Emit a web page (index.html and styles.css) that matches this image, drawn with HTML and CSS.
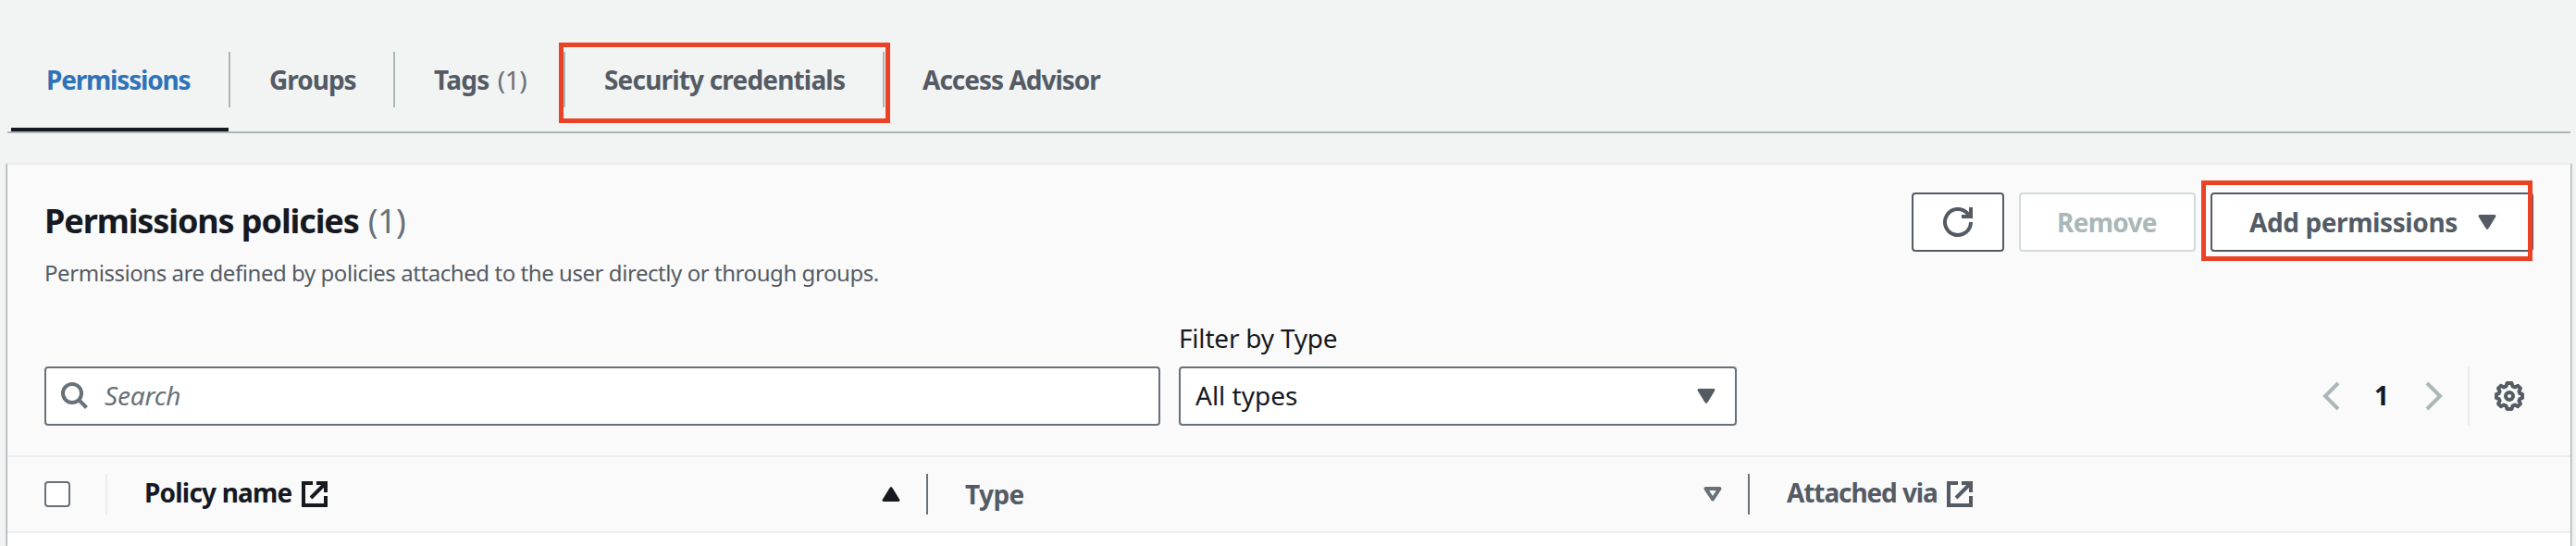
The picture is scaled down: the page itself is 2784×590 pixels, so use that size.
FILE: index.html
```html
<!DOCTYPE html>
<html lang="en">
<head>
<meta charset="utf-8">
<title>Permissions</title>
<link rel="stylesheet" href="styles.css">
</head>
<body>
<nav class="tabs">
  <a class="tab tab-permissions active"><span class="tab-label">Permissions</span></a>
  <a class="tab tab-groups"><span class="tab-label">Groups</span></a>
  <a class="tab tab-tags"><span class="tab-label">Tags<span class="tab-count">(1)</span></span></a>
  <a class="tab tab-security"><span class="tab-label">Security credentials</span><span class="highlight highlight-tab"></span></a>
  <a class="tab tab-advisor"><span class="tab-label">Access Advisor</span></a>
</nav>
<main class="panel">
  <header class="panel-header">
    <div class="heading">
      <h2 class="title">Permissions policies<span class="title-count">(1)</span></h2>
      <p class="description">Permissions are defined by policies attached to the user directly or through groups.</p>
    </div>
    <div class="actions">
      <button class="button button-refresh" aria-label="Refresh">
        <svg width="32" height="32" viewBox="0 0 16 16" fill="none" stroke="currentColor" stroke-width="2"><path d="M15 8a7 7 0 1 1-1.9-4.8L15 5"/><path d="M10 5h5V0"/></svg>
      </button>
      <button class="button button-remove" disabled>Remove</button>
      <button class="button button-add"><span>Add permissions</span>
        <svg width="20" height="16" viewBox="0 0 20 16"><path d="M2 .5h16q1.500 0 .9 1.400L11 14.800q-1 1.300-2 0L1.100 1.900Q.5.500 2 .5z" fill="currentColor" stroke="currentColor"/></svg>
        <span class="highlight highlight-button"></span>
      </button>
    </div>
  </header>
  <div class="filters">
    <div class="search">
      <svg width="30" height="30" viewBox="0 0 30 30" fill="none" stroke="currentColor" stroke-width="4"><circle cx="12" cy="12" r="10"/><path d="M19 19l8.500 8.500"/></svg>
      <span class="placeholder">Search</span>
    </div>
    <div class="type-filter">
      <span class="filter-label">Filter by Type</span>
      <div class="select"><span>All types</span>
        <svg width="20" height="16" viewBox="0 0 20 16"><path d="M2 .5h16q1.500 0 .9 1.400L11 14.800q-1 1.300-2 0L1.100 1.900Q.5.500 2 .5z" fill="currentColor" stroke="currentColor"/></svg>
      </div>
    </div>
    <div class="paging">
      <svg class="arrow" width="19" height="32" viewBox="0 0 19 32" fill="none" stroke="currentColor" stroke-width="4"><path d="M17 2L3 16l14 14"/></svg>
      <span class="page">1</span>
      <svg class="arrow" width="19" height="32" viewBox="0 0 19 32" fill="none" stroke="currentColor" stroke-width="4"><path d="M2 2l14 14L2 30"/></svg>
      <span class="paging-divider"></span>
      <svg class="gear" width="32" height="32" viewBox="0 0 32 32" fill="none" stroke="currentColor" stroke-width="4" stroke-linejoin="round"><path d="M13.500 2h5l1 3.500 2.500 1 3.200-1.700 2.800 2.800-1.600 3.200 1 2.300 2.600.900v4l-2.600.900-1 2.300 1.600 3.200-2.800 2.800-3.200-1.700-2.500 1-1 3.500h-5l-1-3.500-2.500-1-3.200 1.700L4 24.400l1.600-3.200-1-2.300L2 18v-4l2.600-.900 1-2.300L4 7.600l2.800-2.800L10 6.500l2.500-1z"/><circle cx="16" cy="16" r="4"/></svg>
    </div>
  </div>
  <div class="table-head">
    <div class="cell cell-check"><span class="checkbox"></span></div>
    <div class="cell cell-name"><span class="name-text">Policy name</span>
      <svg class="external" width="28" height="28" viewBox="0 0 28 28" fill="none" stroke="currentColor" stroke-width="4"><path d="M12 2H2v24h24V16"/><path d="M16 2h10v10M25 3L10 18"/></svg>
      <svg class="sort" width="20" height="16" viewBox="0 0 20 16"><path d="M2 15.500h16q1.500 0 .9-1.400L11 1.200q-1-1.300-2 0L1.100 14.100Q.5 15.500 2 15.500z" fill="currentColor" stroke="currentColor"/></svg>
    </div>
    <div class="cell cell-type"><span class="type-text">Type</span>
      <svg class="sort" width="20" height="16" viewBox="0 0 20 16" fill="none" stroke="currentColor" stroke-width="4" stroke-linejoin="round"><path d="M2.500 2h15L10 13.500z"/></svg>
    </div>
    <div class="cell cell-via"><span class="via-text">Attached via</span>
      <svg class="external" width="28" height="28" viewBox="0 0 28 28" fill="none" stroke="currentColor" stroke-width="4"><path d="M12 2H2v24h24V16"/><path d="M16 2h10v10M25 3L10 18"/></svg>
    </div>
  </div>
  <div class="table-body"></div>
</main>
</body>
</html>
```

FILE: styles.css
```css
* { box-sizing: border-box; }
body {
  margin: 0;
  height: 590px;
  overflow: hidden;
  background: #f2f3f3;
  color: #16191f;
  font: 28px/40px "Noto Sans", "Open Sans", sans-serif;
  display: flex;
  flex-direction: column;
}
svg { display: block; flex: none; }
h2, p { margin: 0; white-space: nowrap; }

.tabs {
  display: flex;
  margin: 0 6px 0 8px;
  padding: 56px 0 0 4px;
  height: 144px;
  border-bottom: 2px solid #aab7b8;
  font-weight: 700;
  color: #545b64;
}
.tab { position: relative; height: 86px; white-space: nowrap; }
.tab-label {
  display: block;
  height: 60px;
  line-height: 60px;
  border-right: 2px solid #aab7b8;
}
.active { color: #2e73b8; }
.active::after {
  content: "";
  display: block;
  width: 235px;
  height: 4px;
  margin-top: 22px;
  background: #16191f;
}
.tab-permissions { width: 237px; letter-spacing: -1.2px; }
.tab-permissions .tab-label { padding-left: 38px; }
.tab-groups { width: 178px; letter-spacing: -1px; }
.tab-groups .tab-label { padding-left: 42px; }
.tab-tags { width: 184px; letter-spacing: -.7px; }
.tab-tags .tab-label { padding-left: 42px; }
.tab-count { margin-left: 9px; font-weight: 400; color: #687078; letter-spacing: -.4px; }
.tab-security { width: 345px; letter-spacing: -.82px; }
.tab-security .tab-label { padding-left: 42px; }
.tab-advisor { letter-spacing: -1px; }
.tab-advisor .tab-label { padding-left: 41px; border-right: 0; }

.highlight { position: absolute; border: 5px solid #eb4226; }
.highlight-tab { left: -7px; top: -10px; width: 358px; height: 87px; }
.highlight-button { left: -12px; top: -15px; width: 358px; height: 87px; }

.panel {
  flex: 1;
  display: flex;
  flex-direction: column;
  margin: 32px 6px 0 8px;
  border-top: 2px solid #eaeded;
  background: #fafafa;
  box-shadow: 1px 1px 2px rgba(0, 28, 36, .4), -1px 1px 2px rgba(0, 28, 36, .4);
  clip-path: inset(0 -4px);
}
.panel-header {
  display: flex;
  justify-content: space-between;
  height: 160px;
  padding: 30px 40px 0;
}
.title {
  padding-top: 1px;
  font-size: 36px;
  line-height: 60px;
  letter-spacing: -1.1px;
}
.title-count { margin-left: 10px; font-weight: 400; color: #687078; letter-spacing: -.5px; }
.description {
  margin-top: 6px;
  font-size: 24px;
  line-height: 40px;
  letter-spacing: -.44px;
  color: #545b64;
}
.actions { display: flex; gap: 16px; }
.button {
  position: relative;
  display: flex;
  align-items: center;
  height: 64px;
  padding: 0;
  border: 2px solid #545b64;
  border-radius: 4px;
  background: #fff;
  color: #545b64;
  font: 700 28px/58px "Noto Sans", "Open Sans", sans-serif;
  white-space: nowrap;
}
.button-refresh { width: 100px; justify-content: center; }
.button-remove {
  width: 191px;
  padding-left: 39px;
  border-color: #d5dbdb;
  color: #aab7b8;
  letter-spacing: -.7px;
}
.button-add { width: 349px; padding-left: 40px; letter-spacing: -.4px; }
.button-add svg { position: absolute; right: 38px; top: 22px; }

.filters {
  display: flex;
  align-items: flex-end;
  height: 122px;
  padding: 0 40px;
}
.search {
  display: flex;
  align-items: center;
  width: 1206px;
  height: 64px;
  padding-left: 16px;
  border: 2px solid #687078;
  border-radius: 4px;
  background: #fff;
  color: #687078;
}
.search svg { margin-bottom: 1px; }
.placeholder { margin: 0 0 2px 17px; font-style: italic; letter-spacing: -.2px; }
.type-filter { width: 603px; margin-left: 20px; }
.filter-label { display: block; margin-bottom: 11px; letter-spacing: -.2px; }
.select {
  display: flex;
  align-items: center;
  justify-content: space-between;
  height: 64px;
  padding: 0 21px 2px 16px;
  border: 2px solid #687078;
  border-radius: 4px;
  background: #fff;
}
.select svg { color: #545b64; margin-top: 2px; }
.paging {
  display: flex;
  align-items: center;
  height: 64px;
  margin-left: auto;
  padding-right: 10px;
  color: #545b64;
}
.arrow { color: #aab7b8; }
.page {
  width: 92px;
  padding: 0 2px 3px 0;
  text-align: center;
  font-weight: 700;
  color: #16191f;
}
.paging-divider { width: 2px; height: 64px; margin: 0 27px; background: #eaeded; }

.table-head {
  display: flex;
  align-items: center;
  height: 84px;
  margin-top: 32px;
  border-top: 2px solid #eaeded;
  border-bottom: 2px solid #eaeded;
  color: #545b64;
  font-weight: 700;
}
.cell {
  display: flex;
  align-items: center;
  height: 44px;
  border-right: 2px solid #687078;
  white-space: nowrap;
}
.cell-check { width: 108px; padding-left: 40px; border-right-color: #eaeded; }
.checkbox {
  width: 28px;
  height: 28px;
  border: 2px solid #687078;
  border-radius: 4px;
  background: #fff;
}
.cell-name { width: 887px; padding-left: 40px; color: #16191f; }
.name-text { width: 170px; margin-bottom: 4px; letter-spacing: -.8px; }
.cell-name .sort { margin-right: 28px; }
.sort { margin-left: auto; }
.cell-type { width: 888px; padding-left: 40px; }
.type-text { letter-spacing: -.6px; }
.cell-type .sort { margin-right: 28px; color: #687078; }
.cell-via { padding-left: 40px; border-right: 0; }
.via-text { width: 173px; margin-bottom: 4px; letter-spacing: -1.1px; }
.table-body { flex: 1; background: #fff; }
```
